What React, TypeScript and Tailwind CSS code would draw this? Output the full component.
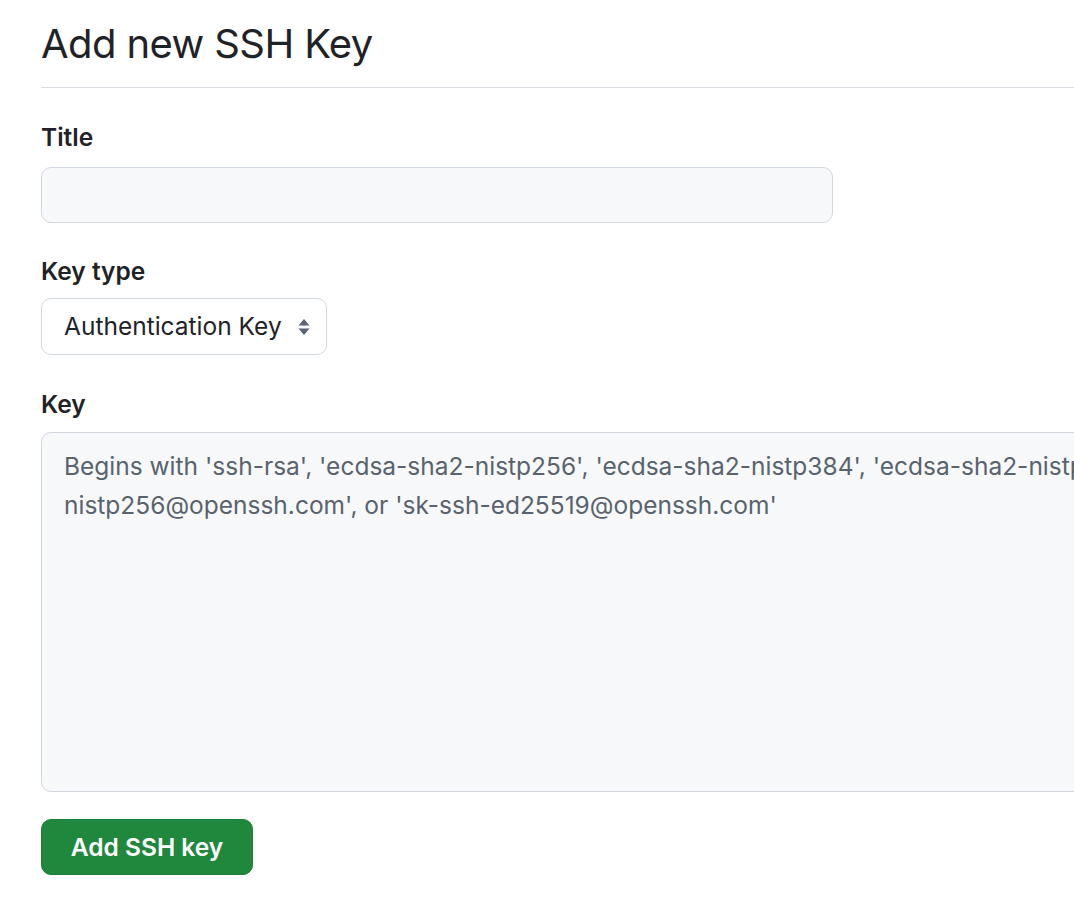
import React from "react";

export default function App() {
  const font = { fontFamily: 'Inter, "Noto Sans", "Liberation Sans", sans-serif' };
  return (
    <div className="w-screen h-[906px] overflow-hidden bg-white" style={font}>
      <div className="pl-[41px] w-[1200px]">
        <div className="pt-[18px] pb-[17px] border-b border-[#d8dee4] w-[1100px]">
          <h2 className="text-[40px] leading-[52px] font-normal text-[#1f2328] tracking-[-0.6px]">Add new SSH Key</h2>
        </div>

        <div className="mt-[31px] text-[24.5px] leading-[36px] font-semibold text-[#1f2328]">Title</div>
        <div className="mt-[12px] w-[792px] h-[56px] rounded-[10px] border border-[#d0d7de] bg-[#f6f8fa]" />

        <div className="mt-[30px] text-[24.5px] leading-[36px] font-semibold text-[#1f2328]">Key type</div>
        <div className="mt-[9px] w-[286px] h-[57px] rounded-[10px] border border-[#d0d7de] bg-white flex items-center pl-[22px] pr-[14px] justify-between">
          <span className="text-[24.5px] text-[#1f2328]">Authentication Key</span>
          <svg width="14" height="18" viewBox="0 0 14 18" className="mr-[1px]">
            <path d="M7 1 L12.5 7.5 H1.5 Z" fill="#59636e" />
            <path d="M7 17 L12.5 10.5 H1.5 Z" fill="#59636e" />
          </svg>
        </div>

        <div className="mt-[31px] text-[24.5px] leading-[36px] font-semibold text-[#1f2328]">Key</div>
        <div className="mt-[10px] w-[1150px] h-[360px] rounded-[10px] border border-[#d0d7de] bg-[#f6f8fa] pl-[22px] pt-[14px] text-[24.5px] leading-[39px] text-[#59636e] whitespace-nowrap overflow-hidden">
          <div>Begins with 'ssh-rsa', 'ecdsa-sha2-nistp256', 'ecdsa-sha2-nistp384', 'ecdsa-sha2-nistp521', 'ssh-ed25519', 'sk-ecdsa-sha2-</div>
          <div>nistp256@openssh.com', or 'sk-ssh-ed25519@openssh.com'</div>
        </div>

        <button className="mt-[27px] w-[212px] h-[56px] rounded-[10px] bg-[#1f883d] border border-[#1a7f37] text-white text-[24.5px] font-semibold flex items-center justify-center">
          Add SSH key
        </button>
      </div>
    </div>
  );
}
